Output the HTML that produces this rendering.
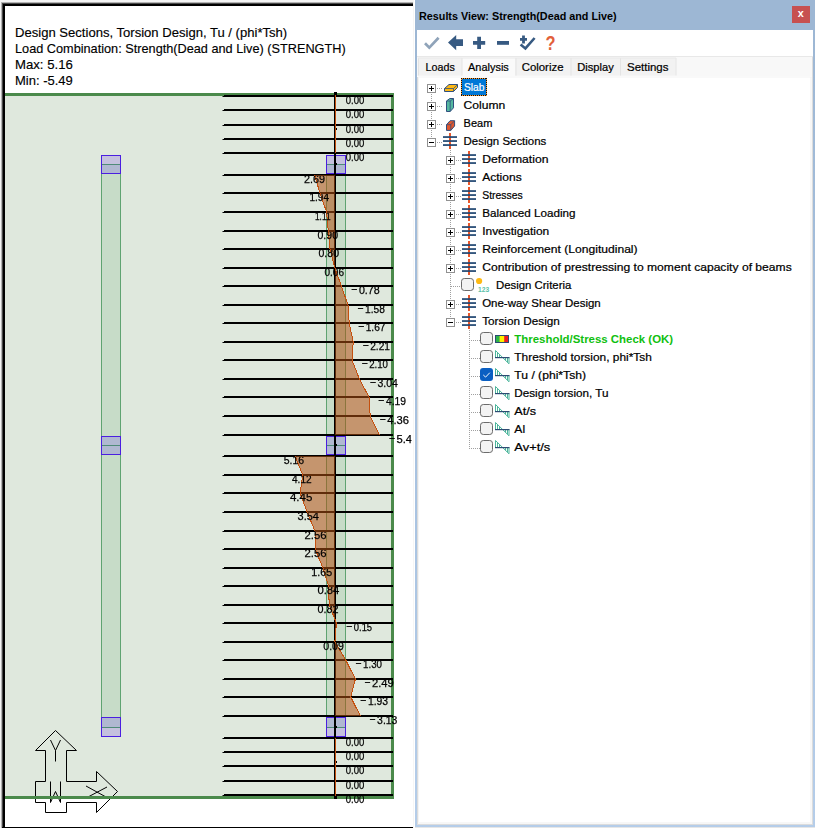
<!DOCTYPE html>
<html><head><meta charset="utf-8"><title>Results View</title>
<style>html,body{margin:0;padding:0;background:#fff;overflow:hidden}svg{display:block;position:absolute;left:0;top:0}text{font-family:"Liberation Sans",sans-serif;}.lb{font-size:11px;fill:#000;stroke:#000;stroke-width:0.25px}.tr{font-size:11.4px;fill:#000;stroke:#000;stroke-width:0.22px}.hd{font-size:13.4px;fill:#000;stroke:#000;stroke-width:0.15px}</style></head><body>
<svg width="815" height="828" viewBox="0 0 815 828">
<defs><linearGradient id="bg" x1="0" y1="0" x2="0" y2="1"><stop offset="0" stop-color="#9db7d4"/><stop offset="0.04" stop-color="#9db7d4"/><stop offset="0.6" stop-color="#a9c3e1"/><stop offset="1" stop-color="#b5cde9"/></linearGradient><clipPath id="lc"><rect x="5" y="6" width="407" height="821"/></clipPath></defs>
<rect x="0" y="0" width="815" height="828" fill="#fff"/>
<rect x="0" y="0" width="414" height="2" fill="#f4f4f4"/><rect x="0" y="0" width="1" height="828" fill="#f4f4f4"/><rect x="1" y="2" width="412" height="1" fill="#b4b4b4"/><rect x="1" y="2" width="1" height="826" fill="#b4b4b4"/><rect x="2" y="3" width="411" height="1" fill="#4a4a4a"/><rect x="2" y="3" width="1" height="825" fill="#4a4a4a"/><rect x="3" y="4" width="410" height="2" fill="#000"/><rect x="3" y="4" width="2" height="824" fill="#000"/><rect x="2" y="827" width="411" height="1" fill="#000"/><rect x="413" y="0" width="1" height="828" fill="#f6f6f6"/>
<rect x="5" y="93" width="389" height="706" fill="#dfe8dd"/><rect x="101.5" y="164.5" width="19" height="563" fill="#c7dcc8" stroke="#5fa371" stroke-width="1"/><rect x="326.5" y="164.5" width="19" height="563" fill="#c7dcc8" stroke="#5fa371" stroke-width="1"/><rect x="101" y="155" width="20" height="9" fill="#c5c1de"/><rect x="101" y="164" width="20" height="10" fill="#b0b8d1"/><rect x="101" y="164" width="20" height="1" fill="#4f8b78"/><rect x="101.5" y="155.5" width="19" height="18" fill="none" stroke="#4a1fe0" stroke-width="1"/><rect x="101" y="436" width="20" height="9" fill="#b0b8d1"/><rect x="101" y="445" width="20" height="10" fill="#b0b8d1"/><rect x="101" y="445" width="20" height="1" fill="#4f8b78"/><rect x="101.5" y="436.5" width="19" height="18" fill="none" stroke="#4a1fe0" stroke-width="1"/><rect x="101" y="717" width="20" height="10" fill="#b0b8d1"/><rect x="101" y="727" width="20" height="10" fill="#c5c1de"/><rect x="101" y="727" width="20" height="1" fill="#4f8b78"/><rect x="101.5" y="717.5" width="19" height="19" fill="none" stroke="#4a1fe0" stroke-width="1"/><rect x="326" y="155" width="20" height="9" fill="#c5c1de"/><rect x="326" y="164" width="20" height="10" fill="#b0b8d1"/><rect x="326" y="164" width="20" height="1" fill="#4f8b78"/><rect x="326.5" y="155.5" width="19" height="18" fill="none" stroke="#4a1fe0" stroke-width="1"/><rect x="326" y="436" width="20" height="9" fill="#b0b8d1"/><rect x="326" y="445" width="20" height="10" fill="#b0b8d1"/><rect x="326" y="445" width="20" height="1" fill="#4f8b78"/><rect x="326.5" y="436.5" width="19" height="18" fill="none" stroke="#4a1fe0" stroke-width="1"/><rect x="326" y="717" width="20" height="10" fill="#b0b8d1"/><rect x="326" y="727" width="20" height="10" fill="#c5c1de"/><rect x="326" y="727" width="20" height="1" fill="#4f8b78"/><rect x="326.5" y="717.5" width="19" height="19" fill="none" stroke="#4a1fe0" stroke-width="1"/>
<rect x="5" y="93" width="389" height="3" fill="#4b8a4b"/><rect x="391" y="93" width="3" height="706" fill="#4b8a4b"/><rect x="224" y="95" width="169" height="1" fill="#000"/><rect x="222.5" y="96" width="170.5" height="1" fill="#000"/><rect x="224" y="109" width="169" height="1" fill="#000"/><rect x="222.5" y="110" width="170.5" height="1" fill="#000"/><rect x="224" y="124" width="169" height="1" fill="#000"/><rect x="222.5" y="125" width="170.5" height="1" fill="#000"/><rect x="224" y="138" width="169" height="1" fill="#000"/><rect x="222.5" y="139" width="170.5" height="1" fill="#000"/><rect x="224" y="152" width="169" height="1" fill="#000"/><rect x="222.5" y="153" width="170.5" height="1" fill="#000"/><rect x="224" y="174" width="169" height="1" fill="#000"/><rect x="222.5" y="175" width="170.5" height="1" fill="#000"/><rect x="224" y="192" width="169" height="1" fill="#000"/><rect x="222.5" y="193" width="170.5" height="1" fill="#000"/><rect x="224" y="211" width="169" height="1" fill="#000"/><rect x="222.5" y="212" width="170.5" height="1" fill="#000"/><rect x="224" y="230" width="169" height="1" fill="#000"/><rect x="222.5" y="231" width="170.5" height="1" fill="#000"/><rect x="224" y="248" width="169" height="1" fill="#000"/><rect x="222.5" y="249" width="170.5" height="1" fill="#000"/><rect x="224" y="267" width="169" height="1" fill="#000"/><rect x="222.5" y="268" width="170.5" height="1" fill="#000"/><rect x="224" y="285" width="169" height="1" fill="#000"/><rect x="222.5" y="286" width="170.5" height="1" fill="#000"/><rect x="224" y="304" width="169" height="1" fill="#000"/><rect x="222.5" y="305" width="170.5" height="1" fill="#000"/><rect x="224" y="322" width="169" height="1" fill="#000"/><rect x="222.5" y="323" width="170.5" height="1" fill="#000"/><rect x="224" y="341" width="169" height="1" fill="#000"/><rect x="222.5" y="342" width="170.5" height="1" fill="#000"/><rect x="224" y="359" width="169" height="1" fill="#000"/><rect x="222.5" y="360" width="170.5" height="1" fill="#000"/><rect x="224" y="378" width="169" height="1" fill="#000"/><rect x="222.5" y="379" width="170.5" height="1" fill="#000"/><rect x="224" y="396" width="169" height="1" fill="#000"/><rect x="222.5" y="397" width="170.5" height="1" fill="#000"/><rect x="224" y="415" width="169" height="1" fill="#000"/><rect x="222.5" y="416" width="170.5" height="1" fill="#000"/><rect x="224" y="434" width="169" height="1" fill="#000"/><rect x="222.5" y="435" width="170.5" height="1" fill="#000"/><rect x="224" y="455" width="169" height="1" fill="#000"/><rect x="222.5" y="456" width="170.5" height="1" fill="#000"/><rect x="224" y="474" width="169" height="1" fill="#000"/><rect x="222.5" y="475" width="170.5" height="1" fill="#000"/><rect x="224" y="492" width="169" height="1" fill="#000"/><rect x="222.5" y="493" width="170.5" height="1" fill="#000"/><rect x="224" y="511" width="169" height="1" fill="#000"/><rect x="222.5" y="512" width="170.5" height="1" fill="#000"/><rect x="224" y="530" width="169" height="1" fill="#000"/><rect x="222.5" y="531" width="170.5" height="1" fill="#000"/><rect x="224" y="548" width="169" height="1" fill="#000"/><rect x="222.5" y="549" width="170.5" height="1" fill="#000"/><rect x="224" y="567" width="169" height="1" fill="#000"/><rect x="222.5" y="568" width="170.5" height="1" fill="#000"/><rect x="224" y="585" width="169" height="1" fill="#000"/><rect x="222.5" y="586" width="170.5" height="1" fill="#000"/><rect x="224" y="604" width="169" height="1" fill="#000"/><rect x="222.5" y="605" width="170.5" height="1" fill="#000"/><rect x="224" y="622" width="169" height="1" fill="#000"/><rect x="222.5" y="623" width="170.5" height="1" fill="#000"/><rect x="224" y="641" width="169" height="1" fill="#000"/><rect x="222.5" y="642" width="170.5" height="1" fill="#000"/><rect x="224" y="659" width="169" height="1" fill="#000"/><rect x="222.5" y="660" width="170.5" height="1" fill="#000"/><rect x="224" y="678" width="169" height="1" fill="#000"/><rect x="222.5" y="679" width="170.5" height="1" fill="#000"/><rect x="224" y="696" width="169" height="1" fill="#000"/><rect x="222.5" y="697" width="170.5" height="1" fill="#000"/><rect x="224" y="715" width="169" height="1" fill="#000"/><rect x="222.5" y="716" width="170.5" height="1" fill="#000"/><rect x="224" y="737" width="169" height="1" fill="#000"/><rect x="222.5" y="738" width="170.5" height="1" fill="#000"/><rect x="224" y="751" width="169" height="1" fill="#000"/><rect x="222.5" y="752" width="170.5" height="1" fill="#000"/><rect x="224" y="765" width="169" height="1" fill="#000"/><rect x="222.5" y="766" width="170.5" height="1" fill="#000"/><rect x="224" y="780" width="169" height="1" fill="#000"/><rect x="222.5" y="781" width="170.5" height="1" fill="#000"/><rect x="224" y="794" width="169" height="1" fill="#000"/><rect x="222.5" y="795" width="170.5" height="1" fill="#000"/>
<rect x="334" y="92" width="2" height="707" fill="#000"/><rect x="334" y="92" width="3" height="3" fill="#000"/><rect x="334" y="796" width="3" height="3" fill="#000"/><polygon points="314.6,175 319.9,193 326.6,212 328.3,231 329.9,249 334.9,268 341.3,286 348.0,305 349.2,323 353.2,342 352.0,360 359.4,379 369.0,397 370.2,416 379.5,435 335,435 335,175" fill="rgb(175,80,18)" fill-opacity="0.55"/><polygon points="295.0,456 302.7,475 300.1,493 307.1,512 315.0,531 315.2,549 322.9,568 328.6,586 329.2,605 336.4,623 334.9,642 345.7,660 355.4,679 350.7,697 360.4,716 335,716 335,456" fill="rgb(175,80,18)" fill-opacity="0.55"/><rect x="336" y="128" width="1" height="2" fill="#000"/><rect x="336" y="163" width="1" height="2" fill="#000"/><rect x="336" y="444" width="1" height="2" fill="#000"/><rect x="336" y="726" width="1" height="2" fill="#000"/><rect x="336" y="761" width="1" height="2" fill="#000"/><path d="M335.5,95 L335.5,153 M314.6,175 L319.9,193 L326.6,212 L328.3,231 L329.9,249 L334.9,268 L341.3,286 L348.0,305 L349.2,323 L353.2,342 L352.0,360 L359.4,379 L369.0,397 L370.2,416 L379.5,435 M295.0,456 L302.7,475 L300.1,493 L307.1,512 L315.0,531 L315.2,549 L322.9,568 L328.6,586 L329.2,605 L336.4,623 L334.9,642 L345.7,660 L355.4,679 L350.7,697 L360.4,716 M335.5,738 L335.5,797" fill="none" stroke="#c4500f" stroke-width="1" shape-rendering="crispEdges"/>
<rect x="5" y="796" width="389" height="3" fill="#4b8a4b"/><clipPath id="bc"><rect x="5" y="97" width="388" height="12"/><rect x="393" y="94" width="18.6" height="15"/><rect x="5" y="111" width="388" height="12"/><rect x="393" y="108" width="18.6" height="15"/><rect x="5" y="126" width="388" height="12"/><rect x="393" y="123" width="18.6" height="15"/><rect x="5" y="140" width="388" height="12"/><rect x="393" y="137" width="18.6" height="15"/><rect x="5" y="154" width="388" height="12"/><rect x="393" y="151" width="18.6" height="15"/><rect x="5" y="176" width="388" height="12"/><rect x="393" y="173" width="18.6" height="15"/><rect x="5" y="194" width="388" height="12"/><rect x="393" y="191" width="18.6" height="15"/><rect x="5" y="213" width="388" height="12"/><rect x="393" y="210" width="18.6" height="15"/><rect x="5" y="232" width="388" height="12"/><rect x="393" y="229" width="18.6" height="15"/><rect x="5" y="250" width="388" height="12"/><rect x="393" y="247" width="18.6" height="15"/><rect x="5" y="269" width="388" height="12"/><rect x="393" y="266" width="18.6" height="15"/><rect x="5" y="287" width="388" height="12"/><rect x="393" y="284" width="18.6" height="15"/><rect x="5" y="306" width="388" height="12"/><rect x="393" y="303" width="18.6" height="15"/><rect x="5" y="324" width="388" height="12"/><rect x="393" y="321" width="18.6" height="15"/><rect x="5" y="343" width="388" height="12"/><rect x="393" y="340" width="18.6" height="15"/><rect x="5" y="361" width="388" height="12"/><rect x="393" y="358" width="18.6" height="15"/><rect x="5" y="380" width="388" height="12"/><rect x="393" y="377" width="18.6" height="15"/><rect x="5" y="398" width="388" height="12"/><rect x="393" y="395" width="18.6" height="15"/><rect x="5" y="417" width="388" height="12"/><rect x="393" y="414" width="18.6" height="15"/><rect x="5" y="436" width="388" height="12"/><rect x="393" y="433" width="18.6" height="15"/><rect x="5" y="457" width="388" height="12"/><rect x="393" y="454" width="18.6" height="15"/><rect x="5" y="476" width="388" height="12"/><rect x="393" y="473" width="18.6" height="15"/><rect x="5" y="494" width="388" height="12"/><rect x="393" y="491" width="18.6" height="15"/><rect x="5" y="513" width="388" height="12"/><rect x="393" y="510" width="18.6" height="15"/><rect x="5" y="532" width="388" height="12"/><rect x="393" y="529" width="18.6" height="15"/><rect x="5" y="550" width="388" height="12"/><rect x="393" y="547" width="18.6" height="15"/><rect x="5" y="569" width="388" height="12"/><rect x="393" y="566" width="18.6" height="15"/><rect x="5" y="587" width="388" height="12"/><rect x="393" y="584" width="18.6" height="15"/><rect x="5" y="606" width="388" height="12"/><rect x="393" y="603" width="18.6" height="15"/><rect x="5" y="624" width="388" height="12"/><rect x="393" y="621" width="18.6" height="15"/><rect x="5" y="643" width="388" height="12"/><rect x="393" y="640" width="18.6" height="15"/><rect x="5" y="661" width="388" height="12"/><rect x="393" y="658" width="18.6" height="15"/><rect x="5" y="680" width="388" height="12"/><rect x="393" y="677" width="18.6" height="15"/><rect x="5" y="698" width="388" height="12"/><rect x="393" y="695" width="18.6" height="15"/><rect x="5" y="717" width="388" height="12"/><rect x="393" y="714" width="18.6" height="15"/><rect x="5" y="739" width="388" height="12"/><rect x="393" y="736" width="18.6" height="15"/><rect x="5" y="753" width="388" height="12"/><rect x="393" y="750" width="18.6" height="15"/><rect x="5" y="767" width="388" height="12"/><rect x="393" y="764" width="18.6" height="15"/><rect x="5" y="782" width="388" height="12"/><rect x="393" y="779" width="18.6" height="15"/><rect x="5" y="796" width="388" height="12"/><rect x="393" y="793" width="18.6" height="15"/></clipPath><g clip-path="url(#bc)" class="lb"><text x="345.7" y="104" textLength="18.6" lengthAdjust="spacingAndGlyphs">0.00</text><text x="345.7" y="118" textLength="18.6" lengthAdjust="spacingAndGlyphs">0.00</text><text x="345.7" y="133" textLength="18.6" lengthAdjust="spacingAndGlyphs">0.00</text><text x="345.7" y="147" textLength="18.6" lengthAdjust="spacingAndGlyphs">0.00</text><text x="345.7" y="161" textLength="18.6" lengthAdjust="spacingAndGlyphs">0.00</text><text x="345.7" y="746" textLength="18.6" lengthAdjust="spacingAndGlyphs">0.00</text><text x="345.7" y="760" textLength="18.6" lengthAdjust="spacingAndGlyphs">0.00</text><text x="345.7" y="774" textLength="18.6" lengthAdjust="spacingAndGlyphs">0.00</text><text x="345.7" y="789" textLength="18.6" lengthAdjust="spacingAndGlyphs">0.00</text><text x="345.7" y="803" textLength="18.6" lengthAdjust="spacingAndGlyphs">0.00</text><text x="304" y="183" textLength="21" lengthAdjust="spacingAndGlyphs">2.69</text><text x="309.5" y="201" textLength="19.5" lengthAdjust="spacingAndGlyphs">1.94</text><text x="315" y="220" textLength="15.5" lengthAdjust="spacingAndGlyphs">1.11</text><text x="317.5" y="239" textLength="20.5" lengthAdjust="spacingAndGlyphs">0.90</text><text x="318.5" y="257" textLength="20.5" lengthAdjust="spacingAndGlyphs">0.80</text><text x="324.5" y="276" textLength="19.5" lengthAdjust="spacingAndGlyphs">0.06</text><text x="351.1" y="294"><tspan dy="-1.7" textLength="6.6" lengthAdjust="spacingAndGlyphs">-</tspan><tspan x="358.9" dy="1.7" textLength="20.8" lengthAdjust="spacingAndGlyphs">0.78</tspan></text><text x="357.3" y="313"><tspan dy="-1.7" textLength="6.6" lengthAdjust="spacingAndGlyphs">-</tspan><tspan x="365.1" dy="1.7" textLength="19.8" lengthAdjust="spacingAndGlyphs">1.58</tspan></text><text x="357.9" y="331"><tspan dy="-1.7" textLength="6.6" lengthAdjust="spacingAndGlyphs">-</tspan><tspan x="365.7" dy="1.7" textLength="19.8" lengthAdjust="spacingAndGlyphs">1.67</tspan></text><text x="362.4" y="350"><tspan dy="-1.7" textLength="6.6" lengthAdjust="spacingAndGlyphs">-</tspan><tspan x="370.2" dy="1.7" textLength="19.8" lengthAdjust="spacingAndGlyphs">2.21</tspan></text><text x="361.4" y="368"><tspan dy="-1.7" textLength="6.6" lengthAdjust="spacingAndGlyphs">-</tspan><tspan x="369.2" dy="1.7" textLength="18.8" lengthAdjust="spacingAndGlyphs">2.10</tspan></text><text x="369.7" y="387"><tspan dy="-1.7" textLength="6.6" lengthAdjust="spacingAndGlyphs">-</tspan><tspan x="377.5" dy="1.7" textLength="20.4" lengthAdjust="spacingAndGlyphs">3.04</tspan></text><text x="378.1" y="405"><tspan dy="-1.7" textLength="6.6" lengthAdjust="spacingAndGlyphs">-</tspan><tspan x="385.9" dy="1.7" textLength="20.1" lengthAdjust="spacingAndGlyphs">4.19</tspan></text><text x="379.4" y="424"><tspan dy="-1.7" textLength="6.6" lengthAdjust="spacingAndGlyphs">-</tspan><tspan x="387.2" dy="1.7" textLength="21.8" lengthAdjust="spacingAndGlyphs">4.36</tspan></text><text x="388.7" y="443"><tspan dy="-1.7" textLength="6.6" lengthAdjust="spacingAndGlyphs">-</tspan><tspan x="396.5" dy="1.7" textLength="21.8" lengthAdjust="spacingAndGlyphs">5.49</tspan></text><text x="283.7" y="464" textLength="20.4" lengthAdjust="spacingAndGlyphs">5.16</text><text x="292" y="483" textLength="19.6" lengthAdjust="spacingAndGlyphs">4.12</text><text x="289.9" y="501" textLength="22.4" lengthAdjust="spacingAndGlyphs">4.45</text><text x="297.6" y="520" textLength="21.4" lengthAdjust="spacingAndGlyphs">3.54</text><text x="304.5" y="539" textLength="22" lengthAdjust="spacingAndGlyphs">2.56</text><text x="304.5" y="557" textLength="22" lengthAdjust="spacingAndGlyphs">2.56</text><text x="311.3" y="576" textLength="20.8" lengthAdjust="spacingAndGlyphs">1.65</text><text x="317.4" y="594" textLength="22" lengthAdjust="spacingAndGlyphs">0.84</text><text x="317.4" y="613" textLength="21" lengthAdjust="spacingAndGlyphs">0.82</text><text x="346.0" y="631"><tspan dy="-1.7" textLength="6.6" lengthAdjust="spacingAndGlyphs">-</tspan><tspan x="353.8" dy="1.7" textLength="18.3" lengthAdjust="spacingAndGlyphs">0.15</tspan></text><text x="323.3" y="650" textLength="20.6" lengthAdjust="spacingAndGlyphs">0.09</text><text x="355.2" y="668"><tspan dy="-1.7" textLength="6.6" lengthAdjust="spacingAndGlyphs">-</tspan><tspan x="363.0" dy="1.7" textLength="19.0" lengthAdjust="spacingAndGlyphs">1.30</tspan></text><text x="364.2" y="687"><tspan dy="-1.7" textLength="6.6" lengthAdjust="spacingAndGlyphs">-</tspan><tspan x="372.0" dy="1.7" textLength="21.8" lengthAdjust="spacingAndGlyphs">2.49</tspan></text><text x="360.1" y="705"><tspan dy="-1.7" textLength="6.6" lengthAdjust="spacingAndGlyphs">-</tspan><tspan x="367.9" dy="1.7" textLength="20.2" lengthAdjust="spacingAndGlyphs">1.93</tspan></text><text x="369.3" y="724"><tspan dy="-1.7" textLength="6.6" lengthAdjust="spacingAndGlyphs">-</tspan><tspan x="377.1" dy="1.7" textLength="20.3" lengthAdjust="spacingAndGlyphs">3.13</tspan></text></g>
<text class="hd" x="15" y="37" textLength="272.2" lengthAdjust="spacingAndGlyphs">Design Sections, Torsion Design, Tu / (phi*Tsh)</text><text class="hd" x="15" y="53" textLength="330.7" lengthAdjust="spacingAndGlyphs">Load Combination: Strength(Dead and Live) (STRENGTH)</text><text class="hd" x="15" y="69" textLength="57.8" lengthAdjust="spacingAndGlyphs">Max: 5.16</text><text class="hd" x="15" y="85" textLength="57.8" lengthAdjust="spacingAndGlyphs">Min: -5.49</text>
<rect x="334" y="796" width="3" height="3" fill="#000"/><g fill="none" stroke="#000" stroke-width="1"><path d="M55.5,730.5 L35.5,750.5 L45.5,750.5 L45.5,781.5 L35.5,781.5 L35.5,802.5 L45.5,802.5 L45.5,812.5 L66.5,812.5 L66.5,802.5 L96.5,802.5 L96.5,812.5 L117.5,791.5 L96.5,771.5 L96.5,781.5 L66.5,781.5 L66.5,750.5 L76.5,750.5 Z"/><path d="M50.5,740 L55.5,750.5 L60.5,740 M55.5,750.5 L55.5,761.5"/><path d="M50.5,781.5 L50.5,802.5 L55.5,791.5 L60.5,802.5 L60.5,781.5"/><path d="M86,786 L106,797 M107,787 L88,797"/></g><rect x="5" y="796" width="125" height="3" fill="#4b8a4b"/>
<rect x="415" y="0" width="400" height="828" fill="url(#bg)"/><rect x="415" y="0" width="400" height="30" fill="#9db7d4"/><rect x="417" y="30" width="396" height="795" fill="#fff"/><rect x="415" y="827" width="400" height="1" fill="#e6e6e6"/><text x="419" y="20.3" style="font-size:11.4px;font-weight:bold" textLength="197.6" lengthAdjust="spacingAndGlyphs">Results View: Strength(Dead and Live)</text><rect x="792" y="6" width="18" height="17" fill="#c75050"/><text x="797.8" y="17.1" style="font-size:11px;font-weight:bold;fill:#fff" textLength="6" lengthAdjust="spacingAndGlyphs">x</text><path d="M425,43.2 L429.3,47.6 L438.6,37.8" fill="none" stroke="#8fa3b9" stroke-width="2.7"/><path d="M448,42.6 L456.2,35 L456.2,39.2 L463,39.2 L463,46 L456.2,46 L456.2,50.2 Z" fill="#375a82"/><path d="M473,41 h4.2 v-4.2 h3.8 v4.2 h4.2 v3.8 h-4.2 v4.2 h-3.8 v-4.2 h-4.2 Z" fill="#375a82"/><rect x="497" y="41" width="12" height="3.8" fill="#375a82"/><path d="M520.6,44.6 L525.4,48.4 L534.6,38" fill="none" stroke="#375a82" stroke-width="2.6"/><path d="M520,38 h2.1 v-2.6 h2.8 v2.6 h2.1 v2.8 h-2.1 v2.6 h-2.8 v-2.6 h-2.1 Z" fill="#375a82"/><text x="545.6" y="50.4" style="font-size:20px;font-weight:bold;fill:#e2603a" textLength="10" lengthAdjust="spacingAndGlyphs">?</text><rect x="417" y="56" width="396" height="20" fill="#f8f8f8"/><rect x="417" y="56" width="396" height="1" fill="#e8e8e8"/><rect x="418" y="58" width="257.5" height="17.5" fill="#f2f2f2"/><rect x="462" y="57" width="53" height="19" fill="#fafafa"/><rect x="418" y="58" width="1" height="17.5" fill="#e4e4e4"/><rect x="461.5" y="58" width="1" height="17.5" fill="#e4e4e4"/><rect x="515.5" y="58" width="1" height="17.5" fill="#e4e4e4"/><rect x="570.5" y="58" width="1" height="17.5" fill="#e4e4e4"/><rect x="620" y="58" width="1" height="17.5" fill="#e4e4e4"/><rect x="675.5" y="58" width="1" height="17.5" fill="#e4e4e4"/><rect x="418" y="57.5" width="258" height="1" fill="#e8e8e8"/><text class="tr" x="425.6" y="70.6" textLength="29.2" lengthAdjust="spacingAndGlyphs">Loads</text><text class="tr" x="468" y="70.6" textLength="40.8" lengthAdjust="spacingAndGlyphs">Analysis</text><text class="tr" x="521.7" y="70.6" textLength="41.8" lengthAdjust="spacingAndGlyphs">Colorize</text><text class="tr" x="577.3" y="70.6" textLength="36.5" lengthAdjust="spacingAndGlyphs">Display</text><text class="tr" x="627" y="70.6" textLength="41.5" lengthAdjust="spacingAndGlyphs">Settings</text><rect x="417" y="76" width="396" height="749" fill="#fff"/><rect x="417" y="77" width="1" height="748" fill="#dcdcdc"/><rect x="418" y="77" width="1" height="747" fill="#f4f4f4"/><rect x="812" y="57" width="1" height="768" fill="#dcdcdc"/><rect x="810" y="77" width="2" height="747" fill="#f7f7f7"/><rect x="417" y="824" width="396" height="1" fill="#dcdcdc"/><rect x="418" y="822" width="393" height="2" fill="#f7f7f7"/><rect x="418" y="76.5" width="394" height="1" fill="#f4f4f4"/>
<rect x="437" y="88" width="1" height="1" fill="#a0a0a0"/><rect x="439" y="88" width="1" height="1" fill="#a0a0a0"/><rect x="441" y="88" width="1" height="1" fill="#a0a0a0"/><rect x="427.5" y="84.5" width="8" height="8" fill="#fff" stroke="#919191" stroke-width="1"/><rect x="429" y="88" width="5" height="1" fill="#000"/><rect x="431" y="86" width="1" height="5" fill="#000"/><path d="M444.5,88.5 L449,84.5 L457.5,84.5 L457.5,87.5 L453.5,91.5 L444.5,91.5 Z" fill="#fdb813" stroke="#2f4f7f" stroke-width="1" stroke-linejoin="round"/><path d="M444.5,88.5 L453.5,88.5 L457.5,84.7 M453.5,88.5 L453.5,91.5" fill="none" stroke="#2f4f7f" stroke-width="0.8"/><rect x="461" y="78" width="26" height="18" fill="#0078d7"/><g shape-rendering="crispEdges"><rect x="461.5" y="78.5" width="25" height="17" fill="none" stroke="#ff9a2e" stroke-width="1"/><path d="M461,78.5 H487 M461,95.5 H487 M461.5,78 V96 M486.5,78 V96" fill="none" stroke="#101010" stroke-width="1" stroke-dasharray="1,1"/></g><text class="tr" x="463.90000000000003" y="91" style="fill:#fff;stroke:#fff" textLength="20.5" lengthAdjust="spacingAndGlyphs">Slab</text><rect x="437" y="106" width="1" height="1" fill="#a0a0a0"/><rect x="439" y="106" width="1" height="1" fill="#a0a0a0"/><rect x="441" y="106" width="1" height="1" fill="#a0a0a0"/><rect x="427.5" y="102.5" width="8" height="8" fill="#fff" stroke="#919191" stroke-width="1"/><rect x="429" y="106" width="5" height="1" fill="#000"/><rect x="431" y="104" width="1" height="5" fill="#000"/><path d="M446.5,101 L449.8,98.5 L453.5,98.5 L453.5,107.8 L450.2,111.5 L446.5,111.5 Z" fill="#55b8a0" stroke="#2f4f7f" stroke-width="1" stroke-linejoin="round"/><path d="M446.5,101 L450.2,101 L453.5,98.6 M450.2,101 L450.2,111.5" fill="none" stroke="#2f4f7f" stroke-width="0.8"/><text class="tr" x="463.6" y="109" textLength="41.7" lengthAdjust="spacingAndGlyphs">Column</text>
<rect x="437" y="124" width="1" height="1" fill="#a0a0a0"/><rect x="439" y="124" width="1" height="1" fill="#a0a0a0"/><rect x="441" y="124" width="1" height="1" fill="#a0a0a0"/><rect x="427.5" y="120.5" width="8" height="8" fill="#fff" stroke="#919191" stroke-width="1"/><rect x="429" y="124" width="5" height="1" fill="#000"/><rect x="431" y="122" width="1" height="5" fill="#000"/><path d="M446.5,124.7 L450.1,120.7 L454.6,120.7 L454.6,126 L450.8,130.4 L446.5,130.4 Z" fill="#e2582e" stroke="#2f4f7f" stroke-width="1" stroke-linejoin="round"/><path d="M446.5,124.7 L450.8,124.7 L454.6,120.8 M450.8,124.7 L450.8,130.4" fill="none" stroke="#2f4f7f" stroke-width="0.8"/><text class="tr" x="463.6" y="127" textLength="28.8" lengthAdjust="spacingAndGlyphs">Beam</text>
<rect x="437" y="142" width="1" height="1" fill="#a0a0a0"/><rect x="439" y="142" width="1" height="1" fill="#a0a0a0"/><rect x="441" y="142" width="1" height="1" fill="#a0a0a0"/><rect x="427.5" y="138.5" width="8" height="8" fill="#fff" stroke="#919191" stroke-width="1"/><rect x="429" y="142" width="5" height="1" fill="#000"/><rect x="449" y="133" width="2" height="16" fill="#e9572b"/><rect x="443" y="136.2" width="14" height="1.7" fill="#1f4571"/><rect x="443" y="140.2" width="14" height="1.7" fill="#1f4571"/><rect x="443" y="144.2" width="14" height="1.7" fill="#1f4571"/><text class="tr" x="463.6" y="145" textLength="82.7" lengthAdjust="spacingAndGlyphs">Design Sections</text>
<rect x="456" y="160" width="1" height="1" fill="#a0a0a0"/><rect x="458" y="160" width="1" height="1" fill="#a0a0a0"/><rect x="460" y="160" width="1" height="1" fill="#a0a0a0"/><rect x="446.5" y="156.5" width="8" height="8" fill="#fff" stroke="#919191" stroke-width="1"/><rect x="448" y="160" width="5" height="1" fill="#000"/><rect x="450" y="158" width="1" height="5" fill="#000"/><rect x="468" y="151" width="2" height="16" fill="#e9572b"/><rect x="462" y="154.2" width="14" height="1.7" fill="#1f4571"/><rect x="462" y="158.2" width="14" height="1.7" fill="#1f4571"/><rect x="462" y="162.2" width="14" height="1.7" fill="#1f4571"/><text class="tr" x="482.2" y="163" textLength="66.3" lengthAdjust="spacingAndGlyphs">Deformation</text>
<rect x="456" y="178" width="1" height="1" fill="#a0a0a0"/><rect x="458" y="178" width="1" height="1" fill="#a0a0a0"/><rect x="460" y="178" width="1" height="1" fill="#a0a0a0"/><rect x="446.5" y="174.5" width="8" height="8" fill="#fff" stroke="#919191" stroke-width="1"/><rect x="448" y="178" width="5" height="1" fill="#000"/><rect x="450" y="176" width="1" height="5" fill="#000"/><rect x="468" y="169" width="2" height="16" fill="#e9572b"/><rect x="462" y="172.2" width="14" height="1.7" fill="#1f4571"/><rect x="462" y="176.2" width="14" height="1.7" fill="#1f4571"/><rect x="462" y="180.2" width="14" height="1.7" fill="#1f4571"/><text class="tr" x="482.2" y="181" textLength="39.5" lengthAdjust="spacingAndGlyphs">Actions</text>
<rect x="456" y="196" width="1" height="1" fill="#a0a0a0"/><rect x="458" y="196" width="1" height="1" fill="#a0a0a0"/><rect x="460" y="196" width="1" height="1" fill="#a0a0a0"/><rect x="446.5" y="192.5" width="8" height="8" fill="#fff" stroke="#919191" stroke-width="1"/><rect x="448" y="196" width="5" height="1" fill="#000"/><rect x="450" y="194" width="1" height="5" fill="#000"/><rect x="468" y="187" width="2" height="16" fill="#e9572b"/><rect x="462" y="190.2" width="14" height="1.7" fill="#1f4571"/><rect x="462" y="194.2" width="14" height="1.7" fill="#1f4571"/><rect x="462" y="198.2" width="14" height="1.7" fill="#1f4571"/><text class="tr" x="482.2" y="199" textLength="40.5" lengthAdjust="spacingAndGlyphs">Stresses</text>
<rect x="456" y="214" width="1" height="1" fill="#a0a0a0"/><rect x="458" y="214" width="1" height="1" fill="#a0a0a0"/><rect x="460" y="214" width="1" height="1" fill="#a0a0a0"/><rect x="446.5" y="210.5" width="8" height="8" fill="#fff" stroke="#919191" stroke-width="1"/><rect x="448" y="214" width="5" height="1" fill="#000"/><rect x="450" y="212" width="1" height="5" fill="#000"/><rect x="468" y="205" width="2" height="16" fill="#e9572b"/><rect x="462" y="208.2" width="14" height="1.7" fill="#1f4571"/><rect x="462" y="212.2" width="14" height="1.7" fill="#1f4571"/><rect x="462" y="216.2" width="14" height="1.7" fill="#1f4571"/><text class="tr" x="482.2" y="217" textLength="93.3" lengthAdjust="spacingAndGlyphs">Balanced Loading</text>
<rect x="456" y="232" width="1" height="1" fill="#a0a0a0"/><rect x="458" y="232" width="1" height="1" fill="#a0a0a0"/><rect x="460" y="232" width="1" height="1" fill="#a0a0a0"/><rect x="446.5" y="228.5" width="8" height="8" fill="#fff" stroke="#919191" stroke-width="1"/><rect x="448" y="232" width="5" height="1" fill="#000"/><rect x="450" y="230" width="1" height="5" fill="#000"/><rect x="468" y="223" width="2" height="16" fill="#e9572b"/><rect x="462" y="226.2" width="14" height="1.7" fill="#1f4571"/><rect x="462" y="230.2" width="14" height="1.7" fill="#1f4571"/><rect x="462" y="234.2" width="14" height="1.7" fill="#1f4571"/><text class="tr" x="482.2" y="235" textLength="67" lengthAdjust="spacingAndGlyphs">Investigation</text>
<rect x="456" y="250" width="1" height="1" fill="#a0a0a0"/><rect x="458" y="250" width="1" height="1" fill="#a0a0a0"/><rect x="460" y="250" width="1" height="1" fill="#a0a0a0"/><rect x="446.5" y="246.5" width="8" height="8" fill="#fff" stroke="#919191" stroke-width="1"/><rect x="448" y="250" width="5" height="1" fill="#000"/><rect x="450" y="248" width="1" height="5" fill="#000"/><rect x="468" y="241" width="2" height="16" fill="#e9572b"/><rect x="462" y="244.2" width="14" height="1.7" fill="#1f4571"/><rect x="462" y="248.2" width="14" height="1.7" fill="#1f4571"/><rect x="462" y="252.2" width="14" height="1.7" fill="#1f4571"/><text class="tr" x="482.2" y="253" textLength="155.4" lengthAdjust="spacingAndGlyphs">Reinforcement (Longitudinal)</text>
<rect x="456" y="268" width="1" height="1" fill="#a0a0a0"/><rect x="458" y="268" width="1" height="1" fill="#a0a0a0"/><rect x="460" y="268" width="1" height="1" fill="#a0a0a0"/><rect x="446.5" y="264.5" width="8" height="8" fill="#fff" stroke="#919191" stroke-width="1"/><rect x="448" y="268" width="5" height="1" fill="#000"/><rect x="450" y="266" width="1" height="5" fill="#000"/><rect x="468" y="259" width="2" height="16" fill="#e9572b"/><rect x="462" y="262.2" width="14" height="1.7" fill="#1f4571"/><rect x="462" y="266.2" width="14" height="1.7" fill="#1f4571"/><rect x="462" y="270.2" width="14" height="1.7" fill="#1f4571"/><text class="tr" x="482.2" y="271" textLength="309.5" lengthAdjust="spacingAndGlyphs">Contribution of prestressing to moment capacity of beams</text>
<rect x="451" y="286" width="1" height="1" fill="#a0a0a0"/><rect x="453" y="286" width="1" height="1" fill="#a0a0a0"/><rect x="455" y="286" width="1" height="1" fill="#a0a0a0"/><rect x="457" y="286" width="1" height="1" fill="#a0a0a0"/><rect x="459" y="286" width="1" height="1" fill="#a0a0a0"/><rect x="461.5" y="278.5" width="12" height="12" rx="2.8" ry="2.8" fill="#f3f3f3" stroke="#6b6b6b" stroke-width="1"/><circle cx="479.1" cy="281" r="3.1" fill="#fdb913"/><text x="478" y="291.8" style="font-size:6.5px;font-weight:bold;fill:#5dbfa8" textLength="11.2" lengthAdjust="spacingAndGlyphs">123</text><text class="tr" x="496" y="289" textLength="75.3" lengthAdjust="spacingAndGlyphs">Design Criteria</text>
<rect x="456" y="304" width="1" height="1" fill="#a0a0a0"/><rect x="458" y="304" width="1" height="1" fill="#a0a0a0"/><rect x="460" y="304" width="1" height="1" fill="#a0a0a0"/><rect x="446.5" y="300.5" width="8" height="8" fill="#fff" stroke="#919191" stroke-width="1"/><rect x="448" y="304" width="5" height="1" fill="#000"/><rect x="450" y="302" width="1" height="5" fill="#000"/><rect x="468" y="295" width="2" height="16" fill="#e9572b"/><rect x="462" y="298.2" width="14" height="1.7" fill="#1f4571"/><rect x="462" y="302.2" width="14" height="1.7" fill="#1f4571"/><rect x="462" y="306.2" width="14" height="1.7" fill="#1f4571"/><text class="tr" x="482.2" y="307" textLength="118.5" lengthAdjust="spacingAndGlyphs">One-way Shear Design</text>
<rect x="456" y="322" width="1" height="1" fill="#a0a0a0"/><rect x="458" y="322" width="1" height="1" fill="#a0a0a0"/><rect x="460" y="322" width="1" height="1" fill="#a0a0a0"/><rect x="446.5" y="318.5" width="8" height="8" fill="#fff" stroke="#919191" stroke-width="1"/><rect x="448" y="322" width="5" height="1" fill="#000"/><rect x="468" y="313" width="2" height="16" fill="#e9572b"/><rect x="462" y="316.2" width="14" height="1.7" fill="#1f4571"/><rect x="462" y="320.2" width="14" height="1.7" fill="#1f4571"/><rect x="462" y="324.2" width="14" height="1.7" fill="#1f4571"/><text class="tr" x="482.2" y="325" textLength="77.6" lengthAdjust="spacingAndGlyphs">Torsion Design</text>
<rect x="471" y="340" width="1" height="1" fill="#a0a0a0"/><rect x="473" y="340" width="1" height="1" fill="#a0a0a0"/><rect x="475" y="340" width="1" height="1" fill="#a0a0a0"/><rect x="477" y="340" width="1" height="1" fill="#a0a0a0"/><rect x="479" y="340" width="1" height="1" fill="#a0a0a0"/><rect x="480.5" y="332.5" width="12" height="12" rx="2.8" ry="2.8" fill="#f3f3f3" stroke="#6b6b6b" stroke-width="1"/><rect x="495.5" y="335.5" width="13" height="7" fill="#fff200" stroke="#2c4b72" stroke-width="1"/><rect x="496" y="336" width="3.6" height="6" fill="#2db34a"/><rect x="504.2" y="336" width="3.8" height="6" fill="#ed1c24"/><text class="tr" x="514.3" y="343" style="font-weight:bold;fill:#10c010;stroke:none" textLength="158.8" lengthAdjust="spacingAndGlyphs">Threshold/Stress Check (OK)</text>
<rect x="471" y="358" width="1" height="1" fill="#a0a0a0"/><rect x="473" y="358" width="1" height="1" fill="#a0a0a0"/><rect x="475" y="358" width="1" height="1" fill="#a0a0a0"/><rect x="477" y="358" width="1" height="1" fill="#a0a0a0"/><rect x="479" y="358" width="1" height="1" fill="#a0a0a0"/><rect x="480.5" y="350.5" width="12" height="12" rx="2.8" ry="2.8" fill="#f3f3f3" stroke="#6b6b6b" stroke-width="1"/><path d="M495.5,357.5 L495.5,350.5 L509,363.8 L509,357.5" fill="none" stroke="#4db69c" stroke-width="1"/><path d="M497.5,352.5 L497.5,357.5" stroke="#4db69c" stroke-width="1" fill="none"/><path d="M499.5,354.4 L499.5,357.5" stroke="#4db69c" stroke-width="1" fill="none"/><path d="M501.5,356.4 L501.5,357.5" stroke="#4db69c" stroke-width="1" fill="none"/><path d="M505.5,357.5 L505.5,360.4" stroke="#4db69c" stroke-width="1" fill="none"/><path d="M507.5,357.5 L507.5,362.3" stroke="#4db69c" stroke-width="1" fill="none"/><rect x="495" y="357.0" width="14.5" height="1.2" fill="#2c4b72"/><text class="tr" x="514.3" y="361" textLength="137.5" lengthAdjust="spacingAndGlyphs">Threshold torsion, phi*Tsh</text>
<rect x="471" y="376" width="1" height="1" fill="#a0a0a0"/><rect x="473" y="376" width="1" height="1" fill="#a0a0a0"/><rect x="475" y="376" width="1" height="1" fill="#a0a0a0"/><rect x="477" y="376" width="1" height="1" fill="#a0a0a0"/><rect x="479" y="376" width="1" height="1" fill="#a0a0a0"/><rect x="480" y="368" width="13" height="13" rx="3" ry="3" fill="#0a5fc2"/><path d="M483.3,375 L485.6,377.1 L489.8,372.7" fill="none" stroke="#fff" stroke-width="0.95"/><path d="M495.5,375.5 L495.5,368.5 L509,381.8 L509,375.5" fill="none" stroke="#4db69c" stroke-width="1"/><path d="M497.5,370.5 L497.5,375.5" stroke="#4db69c" stroke-width="1" fill="none"/><path d="M499.5,372.4 L499.5,375.5" stroke="#4db69c" stroke-width="1" fill="none"/><path d="M501.5,374.4 L501.5,375.5" stroke="#4db69c" stroke-width="1" fill="none"/><path d="M505.5,375.5 L505.5,378.4" stroke="#4db69c" stroke-width="1" fill="none"/><path d="M507.5,375.5 L507.5,380.3" stroke="#4db69c" stroke-width="1" fill="none"/><rect x="495" y="375.0" width="14.5" height="1.2" fill="#2c4b72"/><text class="tr" x="514.3" y="379" textLength="71.7" lengthAdjust="spacingAndGlyphs">Tu / (phi*Tsh)</text>
<rect x="471" y="394" width="1" height="1" fill="#a0a0a0"/><rect x="473" y="394" width="1" height="1" fill="#a0a0a0"/><rect x="475" y="394" width="1" height="1" fill="#a0a0a0"/><rect x="477" y="394" width="1" height="1" fill="#a0a0a0"/><rect x="479" y="394" width="1" height="1" fill="#a0a0a0"/><rect x="480.5" y="386.5" width="12" height="12" rx="2.8" ry="2.8" fill="#f3f3f3" stroke="#6b6b6b" stroke-width="1"/><path d="M495.5,393.5 L495.5,386.5 L509,399.8 L509,393.5" fill="none" stroke="#4db69c" stroke-width="1"/><path d="M497.5,388.5 L497.5,393.5" stroke="#4db69c" stroke-width="1" fill="none"/><path d="M499.5,390.4 L499.5,393.5" stroke="#4db69c" stroke-width="1" fill="none"/><path d="M501.5,392.4 L501.5,393.5" stroke="#4db69c" stroke-width="1" fill="none"/><path d="M505.5,393.5 L505.5,396.4" stroke="#4db69c" stroke-width="1" fill="none"/><path d="M507.5,393.5 L507.5,398.3" stroke="#4db69c" stroke-width="1" fill="none"/><rect x="495" y="393.0" width="14.5" height="1.2" fill="#2c4b72"/><text class="tr" x="514.3" y="397" textLength="94.3" lengthAdjust="spacingAndGlyphs">Design torsion, Tu</text>
<rect x="471" y="412" width="1" height="1" fill="#a0a0a0"/><rect x="473" y="412" width="1" height="1" fill="#a0a0a0"/><rect x="475" y="412" width="1" height="1" fill="#a0a0a0"/><rect x="477" y="412" width="1" height="1" fill="#a0a0a0"/><rect x="479" y="412" width="1" height="1" fill="#a0a0a0"/><rect x="480.5" y="404.5" width="12" height="12" rx="2.8" ry="2.8" fill="#f3f3f3" stroke="#6b6b6b" stroke-width="1"/><path d="M495.5,411.5 L495.5,404.5 L509,417.8 L509,411.5" fill="none" stroke="#4db69c" stroke-width="1"/><path d="M497.5,406.5 L497.5,411.5" stroke="#4db69c" stroke-width="1" fill="none"/><path d="M499.5,408.4 L499.5,411.5" stroke="#4db69c" stroke-width="1" fill="none"/><path d="M501.5,410.4 L501.5,411.5" stroke="#4db69c" stroke-width="1" fill="none"/><path d="M505.5,411.5 L505.5,414.4" stroke="#4db69c" stroke-width="1" fill="none"/><path d="M507.5,411.5 L507.5,416.3" stroke="#4db69c" stroke-width="1" fill="none"/><rect x="495" y="411.0" width="14.5" height="1.2" fill="#2c4b72"/><text class="tr" x="514.3" y="415" textLength="21.8" lengthAdjust="spacingAndGlyphs">At/s</text>
<rect x="471" y="430" width="1" height="1" fill="#a0a0a0"/><rect x="473" y="430" width="1" height="1" fill="#a0a0a0"/><rect x="475" y="430" width="1" height="1" fill="#a0a0a0"/><rect x="477" y="430" width="1" height="1" fill="#a0a0a0"/><rect x="479" y="430" width="1" height="1" fill="#a0a0a0"/><rect x="480.5" y="422.5" width="12" height="12" rx="2.8" ry="2.8" fill="#f3f3f3" stroke="#6b6b6b" stroke-width="1"/><path d="M495.5,429.5 L495.5,422.5 L509,435.8 L509,429.5" fill="none" stroke="#4db69c" stroke-width="1"/><path d="M497.5,424.5 L497.5,429.5" stroke="#4db69c" stroke-width="1" fill="none"/><path d="M499.5,426.4 L499.5,429.5" stroke="#4db69c" stroke-width="1" fill="none"/><path d="M501.5,428.4 L501.5,429.5" stroke="#4db69c" stroke-width="1" fill="none"/><path d="M505.5,429.5 L505.5,432.4" stroke="#4db69c" stroke-width="1" fill="none"/><path d="M507.5,429.5 L507.5,434.3" stroke="#4db69c" stroke-width="1" fill="none"/><rect x="495" y="429.0" width="14.5" height="1.2" fill="#2c4b72"/><text class="tr" x="514.3" y="433" textLength="10.8" lengthAdjust="spacingAndGlyphs">Al</text>
<rect x="471" y="448" width="1" height="1" fill="#a0a0a0"/><rect x="473" y="448" width="1" height="1" fill="#a0a0a0"/><rect x="475" y="448" width="1" height="1" fill="#a0a0a0"/><rect x="477" y="448" width="1" height="1" fill="#a0a0a0"/><rect x="479" y="448" width="1" height="1" fill="#a0a0a0"/><rect x="480.5" y="440.5" width="12" height="12" rx="2.8" ry="2.8" fill="#f3f3f3" stroke="#6b6b6b" stroke-width="1"/><path d="M495.5,447.5 L495.5,440.5 L509,453.8 L509,447.5" fill="none" stroke="#4db69c" stroke-width="1"/><path d="M497.5,442.5 L497.5,447.5" stroke="#4db69c" stroke-width="1" fill="none"/><path d="M499.5,444.4 L499.5,447.5" stroke="#4db69c" stroke-width="1" fill="none"/><path d="M501.5,446.4 L501.5,447.5" stroke="#4db69c" stroke-width="1" fill="none"/><path d="M505.5,447.5 L505.5,450.4" stroke="#4db69c" stroke-width="1" fill="none"/><path d="M507.5,447.5 L507.5,452.3" stroke="#4db69c" stroke-width="1" fill="none"/><rect x="495" y="447.0" width="14.5" height="1.2" fill="#2c4b72"/><text class="tr" x="514.3" y="451" textLength="36" lengthAdjust="spacingAndGlyphs">Av+t/s</text>
<rect x="431" y="94" width="1" height="1" fill="#a0a0a0"/><rect x="431" y="96" width="1" height="1" fill="#a0a0a0"/><rect x="431" y="98" width="1" height="1" fill="#a0a0a0"/><rect x="431" y="100" width="1" height="1" fill="#a0a0a0"/><rect x="431" y="112" width="1" height="1" fill="#a0a0a0"/><rect x="431" y="114" width="1" height="1" fill="#a0a0a0"/><rect x="431" y="116" width="1" height="1" fill="#a0a0a0"/><rect x="431" y="118" width="1" height="1" fill="#a0a0a0"/><rect x="431" y="130" width="1" height="1" fill="#a0a0a0"/><rect x="431" y="132" width="1" height="1" fill="#a0a0a0"/><rect x="431" y="134" width="1" height="1" fill="#a0a0a0"/><rect x="431" y="136" width="1" height="1" fill="#a0a0a0"/><rect x="450" y="150" width="1" height="1" fill="#a0a0a0"/><rect x="450" y="152" width="1" height="1" fill="#a0a0a0"/><rect x="450" y="154" width="1" height="1" fill="#a0a0a0"/><rect x="450" y="166" width="1" height="1" fill="#a0a0a0"/><rect x="450" y="168" width="1" height="1" fill="#a0a0a0"/><rect x="450" y="170" width="1" height="1" fill="#a0a0a0"/><rect x="450" y="172" width="1" height="1" fill="#a0a0a0"/><rect x="450" y="184" width="1" height="1" fill="#a0a0a0"/><rect x="450" y="186" width="1" height="1" fill="#a0a0a0"/><rect x="450" y="188" width="1" height="1" fill="#a0a0a0"/><rect x="450" y="190" width="1" height="1" fill="#a0a0a0"/><rect x="450" y="202" width="1" height="1" fill="#a0a0a0"/><rect x="450" y="204" width="1" height="1" fill="#a0a0a0"/><rect x="450" y="206" width="1" height="1" fill="#a0a0a0"/><rect x="450" y="208" width="1" height="1" fill="#a0a0a0"/><rect x="450" y="220" width="1" height="1" fill="#a0a0a0"/><rect x="450" y="222" width="1" height="1" fill="#a0a0a0"/><rect x="450" y="224" width="1" height="1" fill="#a0a0a0"/><rect x="450" y="226" width="1" height="1" fill="#a0a0a0"/><rect x="450" y="238" width="1" height="1" fill="#a0a0a0"/><rect x="450" y="240" width="1" height="1" fill="#a0a0a0"/><rect x="450" y="242" width="1" height="1" fill="#a0a0a0"/><rect x="450" y="244" width="1" height="1" fill="#a0a0a0"/><rect x="450" y="256" width="1" height="1" fill="#a0a0a0"/><rect x="450" y="258" width="1" height="1" fill="#a0a0a0"/><rect x="450" y="260" width="1" height="1" fill="#a0a0a0"/><rect x="450" y="262" width="1" height="1" fill="#a0a0a0"/><rect x="450" y="274" width="1" height="1" fill="#a0a0a0"/><rect x="450" y="276" width="1" height="1" fill="#a0a0a0"/><rect x="450" y="278" width="1" height="1" fill="#a0a0a0"/><rect x="450" y="280" width="1" height="1" fill="#a0a0a0"/><rect x="450" y="282" width="1" height="1" fill="#a0a0a0"/><rect x="450" y="284" width="1" height="1" fill="#a0a0a0"/><rect x="450" y="286" width="1" height="1" fill="#a0a0a0"/><rect x="450" y="288" width="1" height="1" fill="#a0a0a0"/><rect x="450" y="290" width="1" height="1" fill="#a0a0a0"/><rect x="450" y="292" width="1" height="1" fill="#a0a0a0"/><rect x="450" y="294" width="1" height="1" fill="#a0a0a0"/><rect x="450" y="296" width="1" height="1" fill="#a0a0a0"/><rect x="450" y="298" width="1" height="1" fill="#a0a0a0"/><rect x="450" y="310" width="1" height="1" fill="#a0a0a0"/><rect x="450" y="312" width="1" height="1" fill="#a0a0a0"/><rect x="450" y="314" width="1" height="1" fill="#a0a0a0"/><rect x="450" y="316" width="1" height="1" fill="#a0a0a0"/><rect x="469" y="330" width="1" height="1" fill="#a0a0a0"/><rect x="469" y="332" width="1" height="1" fill="#a0a0a0"/><rect x="469" y="334" width="1" height="1" fill="#a0a0a0"/><rect x="469" y="336" width="1" height="1" fill="#a0a0a0"/><rect x="469" y="338" width="1" height="1" fill="#a0a0a0"/><rect x="469" y="340" width="1" height="1" fill="#a0a0a0"/><rect x="469" y="342" width="1" height="1" fill="#a0a0a0"/><rect x="469" y="344" width="1" height="1" fill="#a0a0a0"/><rect x="469" y="346" width="1" height="1" fill="#a0a0a0"/><rect x="469" y="348" width="1" height="1" fill="#a0a0a0"/><rect x="469" y="350" width="1" height="1" fill="#a0a0a0"/><rect x="469" y="352" width="1" height="1" fill="#a0a0a0"/><rect x="469" y="354" width="1" height="1" fill="#a0a0a0"/><rect x="469" y="356" width="1" height="1" fill="#a0a0a0"/><rect x="469" y="358" width="1" height="1" fill="#a0a0a0"/><rect x="469" y="360" width="1" height="1" fill="#a0a0a0"/><rect x="469" y="362" width="1" height="1" fill="#a0a0a0"/><rect x="469" y="364" width="1" height="1" fill="#a0a0a0"/><rect x="469" y="366" width="1" height="1" fill="#a0a0a0"/><rect x="469" y="368" width="1" height="1" fill="#a0a0a0"/><rect x="469" y="370" width="1" height="1" fill="#a0a0a0"/><rect x="469" y="372" width="1" height="1" fill="#a0a0a0"/><rect x="469" y="374" width="1" height="1" fill="#a0a0a0"/><rect x="469" y="376" width="1" height="1" fill="#a0a0a0"/><rect x="469" y="378" width="1" height="1" fill="#a0a0a0"/><rect x="469" y="380" width="1" height="1" fill="#a0a0a0"/><rect x="469" y="382" width="1" height="1" fill="#a0a0a0"/><rect x="469" y="384" width="1" height="1" fill="#a0a0a0"/><rect x="469" y="386" width="1" height="1" fill="#a0a0a0"/><rect x="469" y="388" width="1" height="1" fill="#a0a0a0"/><rect x="469" y="390" width="1" height="1" fill="#a0a0a0"/><rect x="469" y="392" width="1" height="1" fill="#a0a0a0"/><rect x="469" y="394" width="1" height="1" fill="#a0a0a0"/><rect x="469" y="396" width="1" height="1" fill="#a0a0a0"/><rect x="469" y="398" width="1" height="1" fill="#a0a0a0"/><rect x="469" y="400" width="1" height="1" fill="#a0a0a0"/><rect x="469" y="402" width="1" height="1" fill="#a0a0a0"/><rect x="469" y="404" width="1" height="1" fill="#a0a0a0"/><rect x="469" y="406" width="1" height="1" fill="#a0a0a0"/><rect x="469" y="408" width="1" height="1" fill="#a0a0a0"/><rect x="469" y="410" width="1" height="1" fill="#a0a0a0"/><rect x="469" y="412" width="1" height="1" fill="#a0a0a0"/><rect x="469" y="414" width="1" height="1" fill="#a0a0a0"/><rect x="469" y="416" width="1" height="1" fill="#a0a0a0"/><rect x="469" y="418" width="1" height="1" fill="#a0a0a0"/><rect x="469" y="420" width="1" height="1" fill="#a0a0a0"/><rect x="469" y="422" width="1" height="1" fill="#a0a0a0"/><rect x="469" y="424" width="1" height="1" fill="#a0a0a0"/><rect x="469" y="426" width="1" height="1" fill="#a0a0a0"/><rect x="469" y="428" width="1" height="1" fill="#a0a0a0"/><rect x="469" y="430" width="1" height="1" fill="#a0a0a0"/><rect x="469" y="432" width="1" height="1" fill="#a0a0a0"/><rect x="469" y="434" width="1" height="1" fill="#a0a0a0"/><rect x="469" y="436" width="1" height="1" fill="#a0a0a0"/><rect x="469" y="438" width="1" height="1" fill="#a0a0a0"/><rect x="469" y="440" width="1" height="1" fill="#a0a0a0"/><rect x="469" y="442" width="1" height="1" fill="#a0a0a0"/><rect x="469" y="444" width="1" height="1" fill="#a0a0a0"/><rect x="469" y="446" width="1" height="1" fill="#a0a0a0"/><rect x="469" y="448" width="1" height="1" fill="#a0a0a0"/>
</svg>
</body></html>
